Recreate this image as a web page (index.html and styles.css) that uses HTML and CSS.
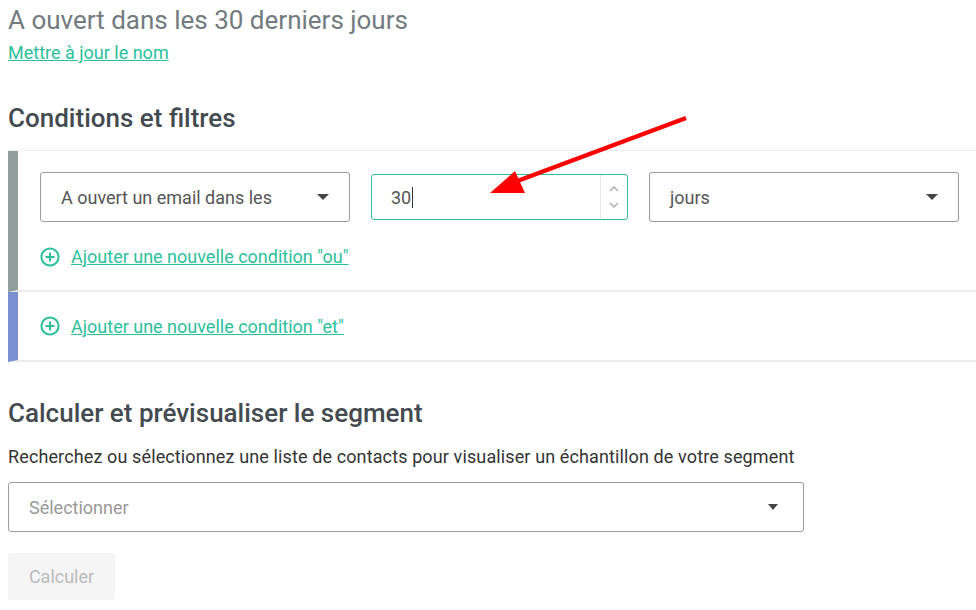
FILE: index.html
```html
<!DOCTYPE html>
<html lang="fr">
<head>
  <meta charset="UTF-8" />
  <title>Segment</title>
  <link rel="stylesheet" href="styles.css">
</head>
<body>

  <div class="page">
    <h1 class="seg-name">A ouvert dans les 30 derniers jours</h1>
    <a class="link" href="#">Mettre à jour le nom</a>

    <h2 class="section-title">Conditions et filtres</h2>

    <div class="conditions">
      <div class="group group-or">
        <div class="row">
          <div class="select">
            <span>A ouvert un email dans les</span>
            <span class="caret"></span>
          </div>
          <div class="number">
            <span class="value">30<span class="cursor"></span></span>
            <div class="spin">
              <svg width="12" height="8" viewBox="0 0 12 8"><path d="M2 6 L6 2 L10 6" fill="none" stroke="#aaa" stroke-width="1.3"/></svg>
              <svg width="12" height="8" viewBox="0 0 12 8"><path d="M2 2 L6 6 L10 2" fill="none" stroke="#aaa" stroke-width="1.3"/></svg>
            </div>
          </div>
          <div class="select">
            <span>jours</span>
            <span class="caret"></span>
          </div>
        </div>
        <a class="add" href="#">
          <svg width="20" height="20" viewBox="0 0 20 20"><circle cx="10" cy="10" r="8.6" fill="none" stroke="#2bbf9b" stroke-width="2"/><path d="M10 5.5 V14.5 M5.5 10 H14.5" stroke="#2bbf9b" stroke-width="2"/></svg>
          <span>Ajouter une nouvelle condition "ou"</span>
        </a>
      </div>
      <div class="group group-and">
        <a class="add" href="#">
          <svg width="20" height="20" viewBox="0 0 20 20"><circle cx="10" cy="10" r="8.6" fill="none" stroke="#2bbf9b" stroke-width="2"/><path d="M10 5.5 V14.5 M5.5 10 H14.5" stroke="#2bbf9b" stroke-width="2"/></svg>
          <span>Ajouter une nouvelle condition "et"</span>
        </a>
      </div>
    </div>

    <h2 class="section-title preview-title">Calculer et prévisualiser le segment</h2>
    <p class="hint">Recherchez ou sélectionnez une liste de contacts pour visualiser un échantillon de votre segment</p>

    <div class="select wide">
      <span class="placeholder">Sélectionner</span>
      <span class="caret small"></span>
    </div>

    <button class="btn-calc" disabled>Calculer</button>
  </div>

  <!-- annotation arrow drawn over the page -->
  <svg class="arrow" width="976" height="610" viewBox="0 0 976 610">
    <line x1="686" y1="118" x2="512" y2="183" stroke="#f00" stroke-width="4.5"/>
    <polygon points="490,193 515,171 525,193" fill="#f00"/>
  </svg>

</body>
</html>
```

FILE: styles.css
```css
body {
  font-family: Roboto, "Liberation Sans", sans-serif;
  background: #fff;
  margin: 0;
  padding: 0;
  color: #444;
}

.page {
  padding: 0 0 0 8px;
}

.seg-name {
  margin: 0;
  padding-top: 5px;
  font-size: 26px;
  font-weight: 400;
  color: #727b80;
  line-height: 30px;
}

.link {
  display: inline-block;
  margin-top: 8px;
  font-size: 18px;
  color: #2bbf9b;
  line-height: 20px;
}

.section-title {
  margin: 40px 0 0;
  font-size: 26px;
  font-weight: 500;
  color: #444b50;
  line-height: 30px;
}

.conditions {
  margin-top: 17px;
  border-top: 1px solid #ececec;
}

.group {
  border-left: 10px solid #909e9c;
  border-bottom: 2px solid #ececec;
  padding-left: 22px;
}

.group-or {
  padding-top: 21px;
  box-sizing: border-box;
  height: 141px;
}

.group-and {
  border-left-color: #7a8fd2;
  height: 68px;
  display: flex;
  align-items: center;
}

.row {
  display: flex;
  align-items: center;
  gap: 21px;
}

.select {
  width: 310px;
  height: 50px;
  box-sizing: border-box;
  border: 1px solid #9a9a9a;
  border-radius: 3px;
  display: flex;
  align-items: center;
  justify-content: space-between;
  padding: 0 20px;
  font-size: 18px;
  color: #555;
}

.caret {
  width: 0;
  height: 0;
  border-left: 6px solid transparent;
  border-right: 6px solid transparent;
  border-top: 6px solid #444;
}

.caret.small {
  border-left-width: 5px;
  border-right-width: 5px;
  border-top-width: 6px;
  margin-right: 5px;
}

.number {
  width: 257px;
  height: 46px;
  box-sizing: border-box;
  border: 1px solid #2bbf9b;
  border-radius: 3px;
  display: flex;
  align-items: stretch;
  font-size: 18px;
  color: #555;
}

.number .value {
  flex: 1;
  display: flex;
  align-items: center;
  padding-left: 19px;
}

.cursor {
  display: inline-block;
  width: 1px;
  height: 21px;
  background: #333;
  margin-left: 1px;
}

.spin {
  width: 26px;
  border-left: 1px solid #e8e8e8;
  display: flex;
  flex-direction: column;
  justify-content: center;
  align-items: center;
  gap: 8px;
}

.add {
  display: inline-flex;
  align-items: center;
  gap: 11px;
  margin-top: 24px;
  font-size: 18px;
  color: #2bbf9b;
}

.group-and .add {
  margin-top: 0;
}

.add span {
  text-decoration: underline;
}

.preview-title {
  margin-top: 36px;
}

.hint {
  margin: 18px 0 0;
  font-size: 18px;
  color: #333;
  line-height: 22px;
  letter-spacing: 0.12px;
}

.select.wide {
  width: 796px;
  height: 50px;
  margin-top: 14px;
}

.placeholder {
  color: #999;
}

.btn-calc {
  margin-top: 21px;
  width: 107px;
  height: 47px;
  border: none;
  border-radius: 3px;
  background: #f5f5f5;
  color: #bbb;
  font-family: inherit;
  font-size: 18px;
}

.arrow {
  position: absolute;
  left: 0;
  top: 0;
  pointer-events: none;
}
```
